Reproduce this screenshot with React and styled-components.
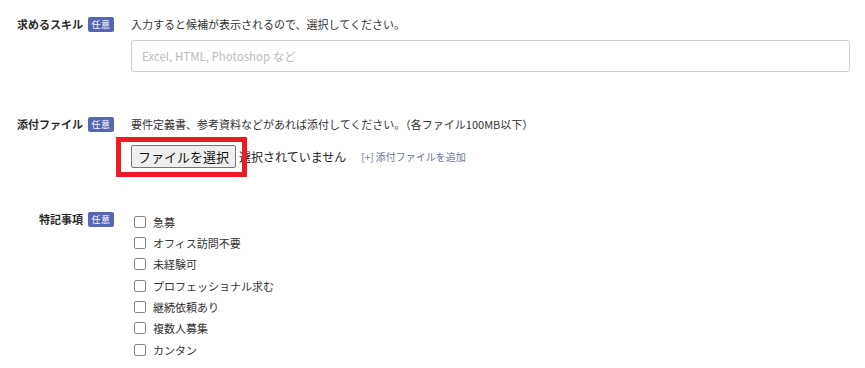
import React from 'react';
import styled, { createGlobalStyle } from 'styled-components';

const Global = createGlobalStyle`
	body {
		margin: 0;
		background: #ffffff;
		font-family: 'Noto Sans CJK JP', 'Noto Sans', sans-serif;
		color: #333333;
	}
`;

const Page = styled.div`
	width: 865px;
	height: 368px;
	padding-top: 16px;
	box-sizing: border-box;
	overflow: hidden;
`;

const Section = styled.div`
	display: grid;
	grid-template-columns: 114px 1fr;
	column-gap: 17px;
	padding-right: 15px;
	margin-bottom: ${(p) => p.gap || 0}px;
`;

const LabelCell = styled.div`
	display: flex;
	justify-content: flex-end;
	align-items: center;
	gap: 5px;
	height: 16px;
`;

const Label = styled.span`
	font-size: 11px;
	font-weight: bold;
	color: #2a2a2a;
	line-height: 16px;
	white-space: nowrap;
`;

const Badge = styled.span`
	display: inline-flex;
	align-items: center;
	justify-content: center;
	width: 26px;
	height: 15px;
	border-radius: 2px;
	background: #5566b3;
	color: #ffffff;
	font-size: 9px;
	letter-spacing: 0.5px;
`;

const Body = styled.div`
	display: flex;
	flex-direction: column;
	align-items: flex-start;
`;

const Note = styled.p`
	margin: 0;
	font-size: 11px;
	line-height: 16px;
	color: #333333;
	white-space: nowrap;
`;

const TextInput = styled.input`
	margin-top: 8px;
	width: 100%;
	height: 32px;
	box-sizing: border-box;
	border: 1px solid #cccccc;
	border-radius: 3px;
	padding: 0 10px;
	font-family: inherit;
	font-size: 11.5px;
	&::placeholder {
		color: #bbbbbb;
	}
	&:focus {
		outline: none;
	}
`;

const FileRow = styled.div`
	display: flex;
	align-items: center;
	margin-top: 13px;
	height: 23px;
`;

const FilePicker = styled.div`
	position: relative;
	display: flex;
	align-items: center;
`;

const FileButton = styled.button`
	height: 23px;
	width: 105px;
	padding: 0;
	border: 1px solid #767676;
	border-radius: 2px;
	background: #efefef;
	color: #111111;
	font-family: inherit;
	font-size: 13px;
`;

const FileStatus = styled.span`
	margin-left: 3px;
	font-size: 12px;
	color: #222222;
`;

const Highlight = styled.span`
	position: absolute;
	left: -15px;
	top: -8px;
	width: 131px;
	height: 40px;
	box-sizing: border-box;
	border: 5px solid #ec1c24;
	pointer-events: none;
`;

const AddLink = styled.a`
	margin-left: 15px;
	font-size: 10px;
	color: #6b7693;
	text-decoration: none;
`;

const Checks = styled.ul`
	list-style: none;
	margin: 0;
	padding: 0;
`;

const CheckItem = styled.li`
	display: flex;
	align-items: center;
	height: 21.33px;
	padding-left: 3px;
	font-size: 11px;
	color: #333333;
`;

const Box = styled.span`
	width: 10px;
	height: 10px;
	border: 1px solid #858585;
	border-radius: 2px;
	margin-right: 7px;
	background: #ffffff;
`;

const options = ['急募', 'オフィス訪問不要', '未経験可', 'プロフェッショナル求む', '継続依頼あり', '複数人募集', 'カンタン'];

export default () => (
	<Page>
		<Global />
		<Section gap={44}>
			<LabelCell>
				<Label>求めるスキル</Label>
				<Badge>任意</Badge>
			</LabelCell>
			<Body>
				<Note>入力すると候補が表示されるので、選択してください。</Note>
				<TextInput placeholder='Excel, HTML, Photoshop など' />
			</Body>
		</Section>
		<Section gap={43}>
			<LabelCell>
				<Label>添付ファイル</Label>
				<Badge>任意</Badge>
			</LabelCell>
			<Body>
				<Note>要件定義書、参考資料などがあれば添付してください。（各ファイル100MB以下）</Note>
				<FileRow>
					<FilePicker>
						<FileButton>ファイルを選択</FileButton>
						<FileStatus>選択されていません</FileStatus>
						<Highlight />
					</FilePicker>
					<AddLink href='#'>[+] 添付ファイルを追加</AddLink>
				</FileRow>
			</Body>
		</Section>
		<Section>
			<LabelCell>
				<Label>特記事項</Label>
				<Badge>任意</Badge>
			</LabelCell>
			<Checks>
				{options.map((o) => (
					<CheckItem key={o}>
						<Box />
						{o}
					</CheckItem>
				))}
			</Checks>
		</Section>
	</Page>
);
